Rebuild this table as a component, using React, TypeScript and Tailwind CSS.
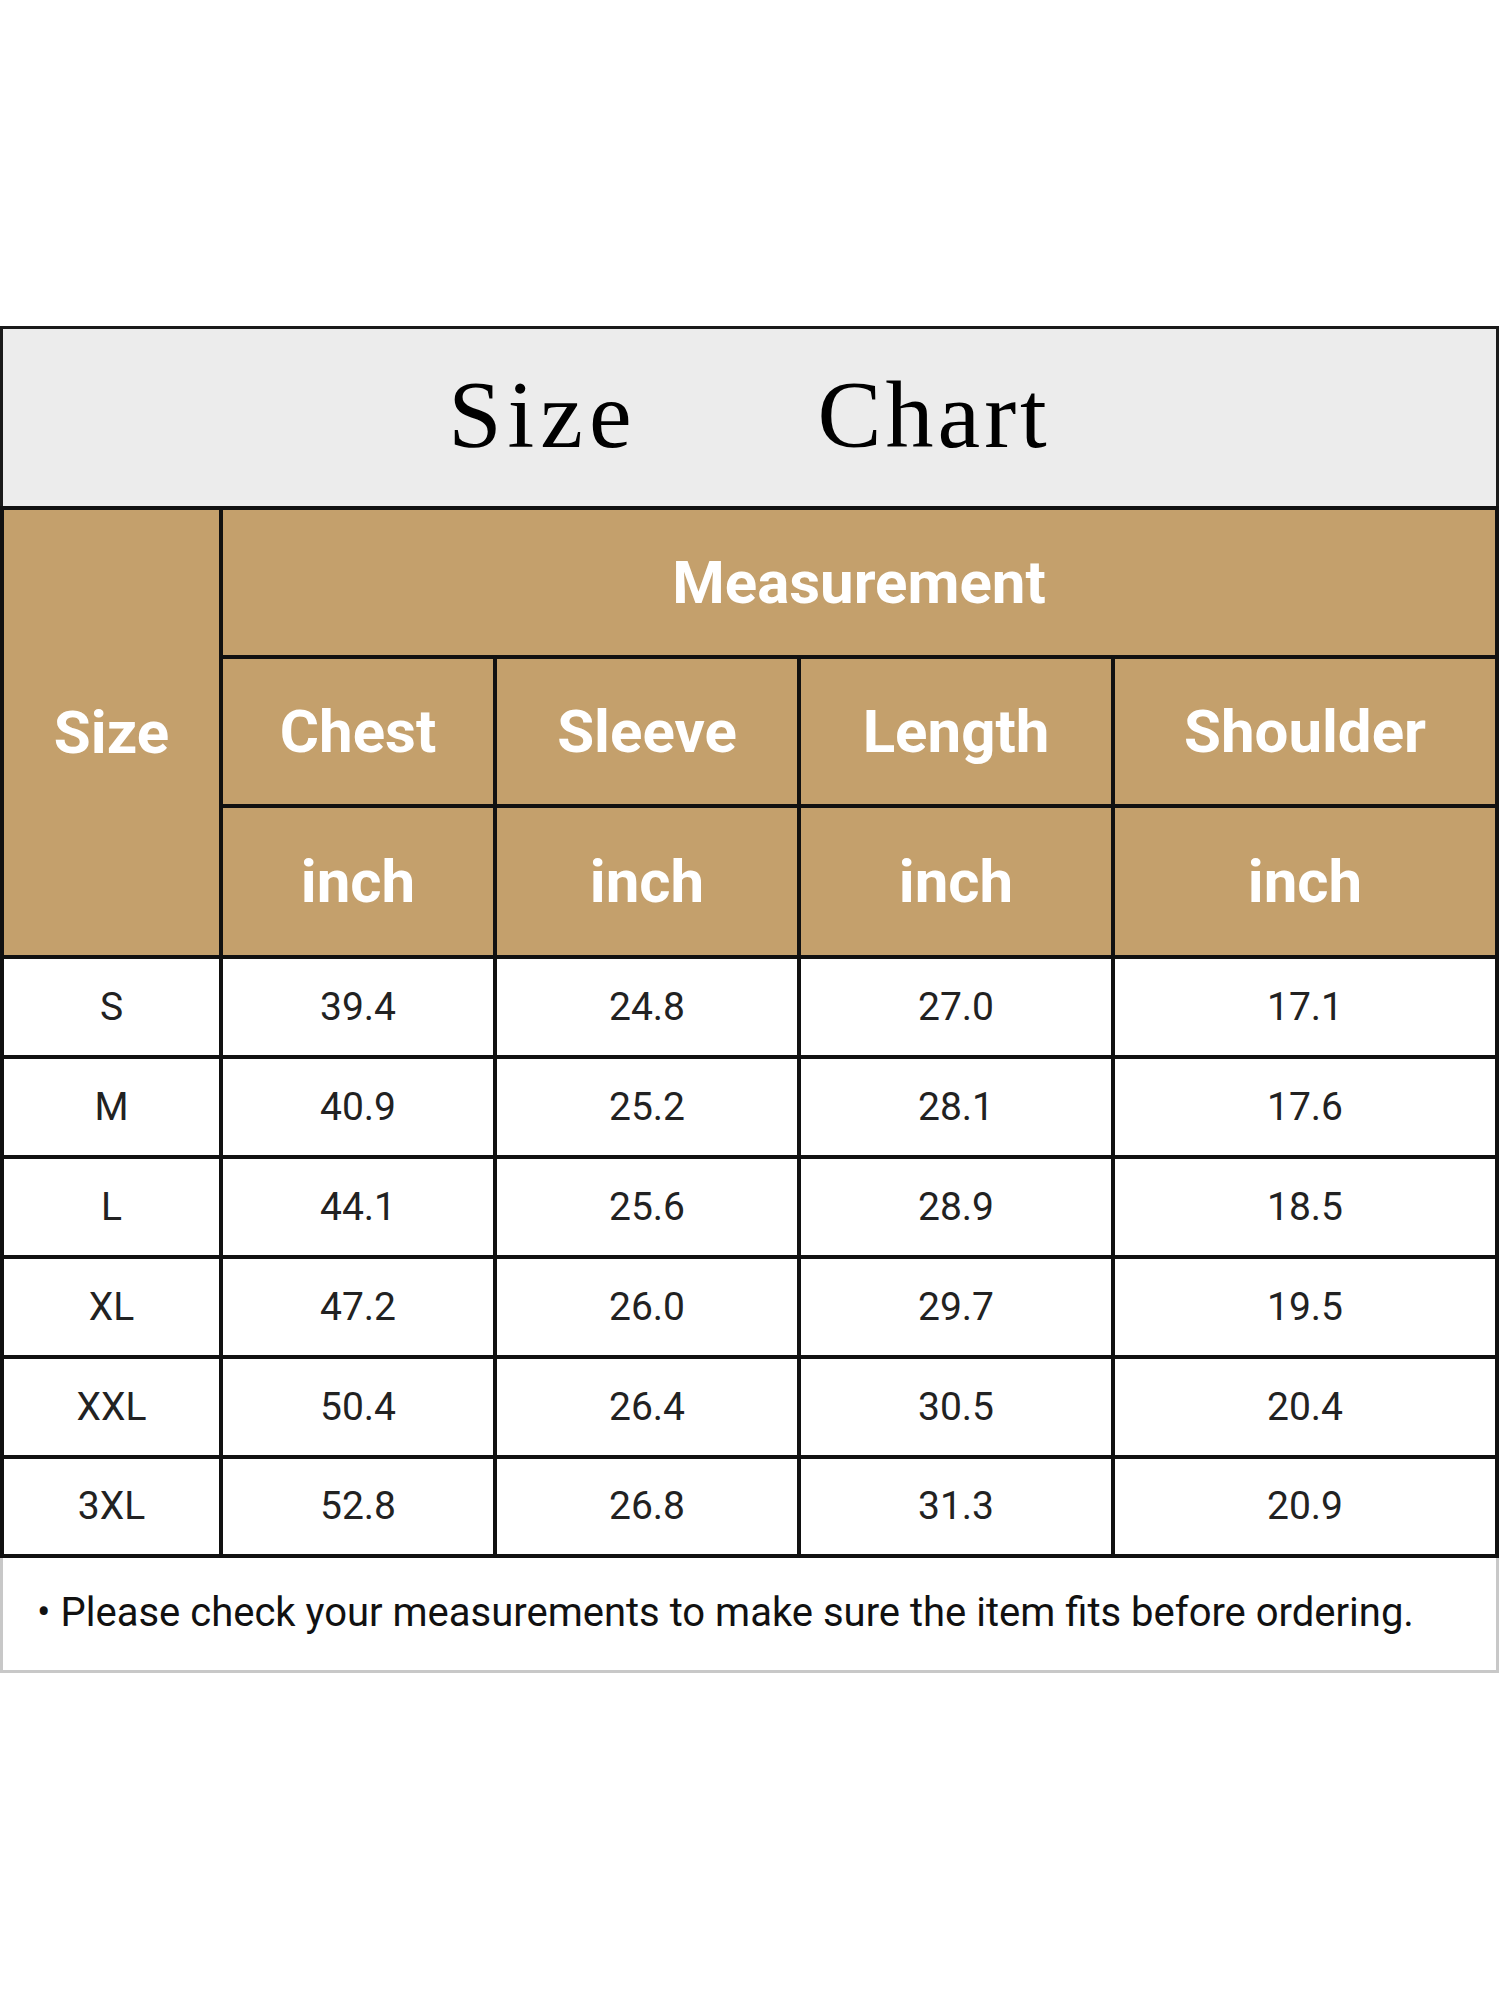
const columns = ["Chest", "Sleeve", "Length", "Shoulder"];

const rows: [string, string, string, string, string][] = [
  ["S", "39.4", "24.8", "27.0", "17.1"],
  ["M", "40.9", "25.2", "28.1", "17.6"],
  ["L", "44.1", "25.6", "28.9", "18.5"],
  ["XL", "47.2", "26.0", "29.7", "19.5"],
  ["XXL", "50.4", "26.4", "30.5", "20.4"],
  ["3XL", "52.8", "26.8", "31.3", "20.9"],
];

function HeadCell({ children, className = "" }: { children: React.ReactNode; className?: string }) {
  return (
    <div className={`flex items-center justify-center bg-[#c4a06c] text-white font-bold text-[60px] leading-none ${className}`}>
      {children}
    </div>
  );
}

export default function App() {
  return (
    <div className="w-[1500px] h-[2000px] bg-white pt-[326px] font-['Roboto',sans-serif]">
      <div className="w-[1499px]">
        {/* title */}
        <div className="h-[180px] bg-[#ececec] border-t-[3px] border-x-[3px] border-[#1a1a1a] flex items-center justify-center gap-[180px] font-['Liberation_Serif',serif] text-[96px] leading-none text-black pb-[6px]">
          <span className="tracking-[6px]">Size</span>
          <span className="tracking-[4px]">Chart</span>
        </div>

        {/* table */}
        <div className="grid grid-cols-[215px_270px_300px_310px_380px] grid-rows-[145px_145px_147px_96px_96px_96px_96px_96px_95px] gap-[4px] p-[4px] bg-[#111]">
          <HeadCell className="row-span-3">Size</HeadCell>
          <HeadCell className="col-span-4">Measurement</HeadCell>
          {columns.map((c) => (
            <HeadCell key={c}>{c}</HeadCell>
          ))}
          {columns.map((c) => (
            <HeadCell key={c + "-unit"}>inch</HeadCell>
          ))}
          {rows.map((r) =>
            r.map((v, i) => (
              <div
                key={r[0] + i}
                className="flex items-center justify-center bg-white text-[#222] text-[39px] leading-none"
              >
                {v}
              </div>
            ))
          )}
        </div>

        {/* note */}
        <div className="h-[115px] border-x-[3px] border-b-[3px] border-[#c8c8c8] flex items-center pl-[34px] text-[40px] text-[#111] leading-none pb-[2px]">
          <span className="mr-[10px]">•</span>
          <span>Please check your measurements to make sure the item fits before ordering.</span>
        </div>
      </div>
    </div>
  );
}
